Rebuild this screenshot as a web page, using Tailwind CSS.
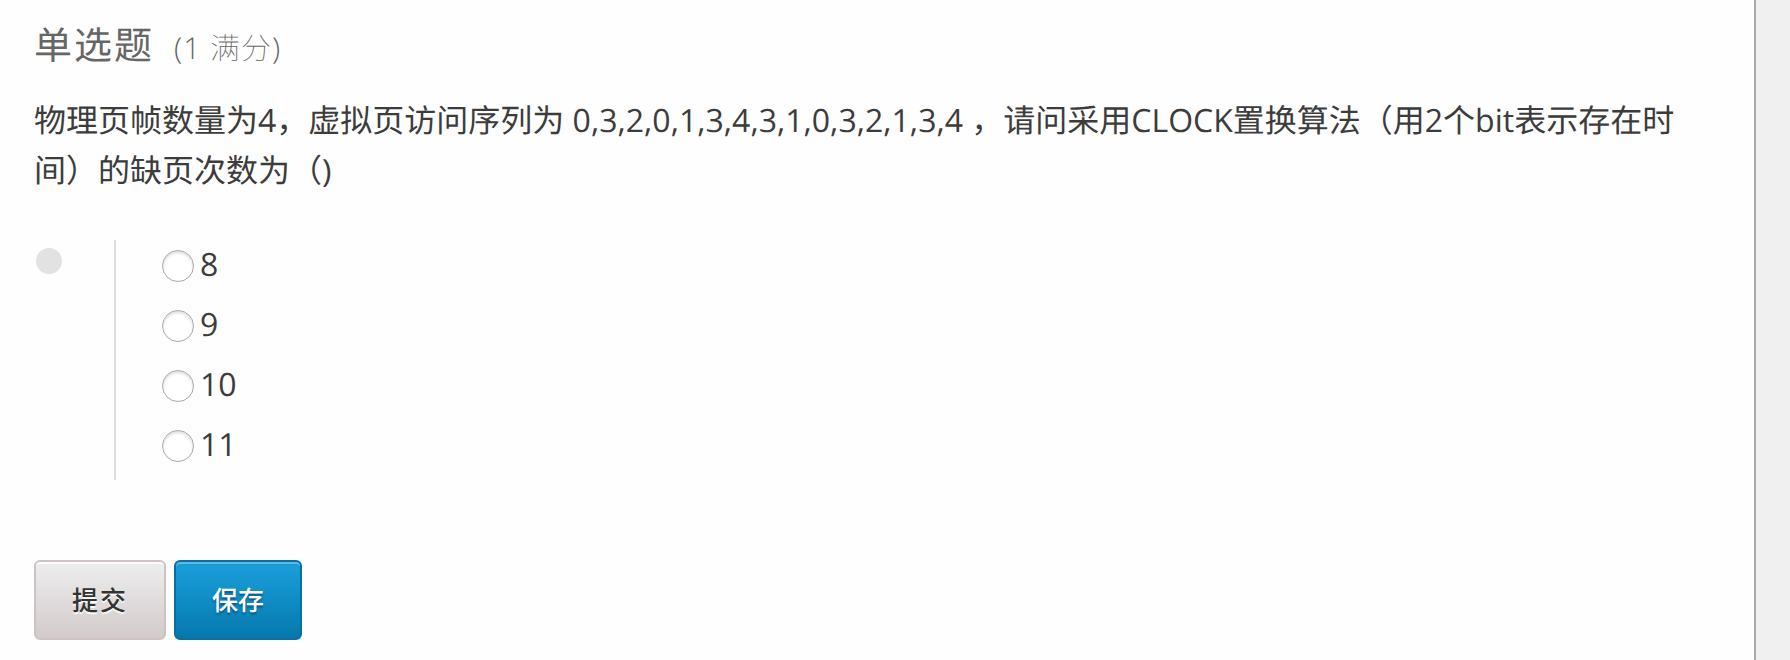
<!DOCTYPE html>
<html lang="zh-CN">
<head>
<meta charset="utf-8">
<meta name="viewport" content="width=device-width, initial-scale=1">
<title>单选题</title>
<script src="https://cdn.jsdelivr.net/npm/@tailwindcss/browser@4"></script>
</head>
<body class="flex min-h-screen bg-[#f0f0f0] font-['Open_Sans','Noto_Sans_CJK_SC',sans-serif] text-[#3c3c3c] [text-rendering:geometricPrecision]">
<main class="mr-[34px] flex-1 border-r-2 border-[#aaaaaa] bg-[#fefefe] pt-4 pr-16 pb-5 pl-[34px]">
  <h2 class="flex items-baseline gap-5 text-[38px] leading-[58px] tracking-[2px] text-[#666666]">
    <span>单选题</span>
    <span class="text-[30px] font-light tracking-[1px]">(1 <span class="font-thin">满分</span>)</span>
  </h2>
  <form class="mt-[19px]">
    <fieldset>
      <legend class="text-[32px] leading-[50px]">物理页帧数量为4，虚拟页访问序列为 0,3,2,0,1,3,4,3,1,0,3,2,1,3,4 ，请问采用CLOCK置换算法（用2个bit表示存在时间）的缺页次数为（)</legend>
      <div class="mt-11 flex">
        <span class="mt-2 ml-[2px] size-[26px] rounded-full bg-[#e2e2e2]"></span>
        <div class="ml-[52px] border-l-2 border-[#dddddd] pl-[46px] text-[32px] leading-[50px]">
          <label class="flex h-15 items-start gap-1.5"><input type="radio" name="answer" value="8" class="mt-2.5 size-8 appearance-none rounded-full border border-[#aaaaaa] bg-white shadow-[inset_0_2px_3px_#dddddd] checked:bg-[#999999]"><span>8</span></label>
          <label class="flex h-15 items-start gap-1.5"><input type="radio" name="answer" value="9" class="mt-2.5 size-8 appearance-none rounded-full border border-[#aaaaaa] bg-white shadow-[inset_0_2px_3px_#dddddd] checked:bg-[#999999]"><span>9</span></label>
          <label class="flex h-15 items-start gap-1.5"><input type="radio" name="answer" value="10" class="mt-2.5 size-8 appearance-none rounded-full border border-[#aaaaaa] bg-white shadow-[inset_0_2px_3px_#dddddd] checked:bg-[#999999]"><span>10</span></label>
          <label class="flex h-15 items-start gap-1.5"><input type="radio" name="answer" value="11" class="mt-2.5 size-8 appearance-none rounded-full border border-[#aaaaaa] bg-white shadow-[inset_0_2px_3px_#dddddd] checked:bg-[#999999]"><span>11</span></label>
        </div>
      </div>
    </fieldset>
    <div class="mt-20 flex gap-2">
      <button type="button" class="h-20 rounded-md border-2 border-[#cdc3c4] bg-linear-to-b from-[#eeeeee] to-[#d2cacb] px-9 text-[26px] font-medium tracking-[2px] text-[#333333] shadow-[inset_0_2px_0_#ffffff] [text-shadow:0_2px_0_#f8f8f8]">提交</button>
      <button type="button" class="h-20 rounded-md border-2 border-[#0b6f9f] bg-linear-to-b from-[#1a9fdb] to-[#0579ae] px-9 text-[26px] font-medium text-white shadow-[inset_0_2px_0_#61b8e1] [text-shadow:0_2px_2px_#075683]">保存</button>
    </div>
  </form>
</main>
</body>
</html>
